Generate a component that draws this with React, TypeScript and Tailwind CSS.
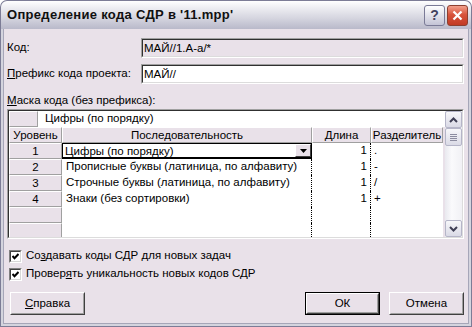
import React from "react";

const font = "font-['Liberation_Sans',Arial,sans-serif]";

function Sunken({ className = "", children }: { className?: string; children?: React.ReactNode }) {
  return (
    <div className={`border border-t-[#A0A0A0] border-l-[#A0A0A0] border-b-white border-r-white ${className}`}>
      <div className="h-full border border-t-[#303030] border-l-[#303030] border-b-[#DCDCDC] border-r-[#DCDCDC]">
        {children}
      </div>
    </div>
  );
}

function Raised({ className = "", children }: { className?: string; children?: React.ReactNode }) {
  return (
    <div
      className={`bg-[#E9E1E9] border border-t-white border-l-white border-b-[#A0A0A0] border-r-[#A0A0A0] ${className}`}
    >
      {children}
    </div>
  );
}

function Chevron({ down }: { down?: boolean }) {
  return (
    <svg width="9" height="6" viewBox="0 0 9 6">
      <polyline
        points={down ? "1,1 4.5,4.5 8,1" : "1,5 4.5,1.5 8,5"}
        fill="none"
        stroke="#3F3F55"
        strokeWidth="2"
      />
    </svg>
  );
}

function ScrollBar() {
  const btn =
    "h-[17px] w-[17px] flex items-center justify-center rounded-[2px] border border-[#B5B5C8] bg-[linear-gradient(to_bottom,#F7F7FA,#DADAE6)]";
  return (
    <div className="w-[17px] h-full flex flex-col bg-[linear-gradient(to_right,#E9E9EF,#FAFAFC_40%,#F1F1F5)]">
      <div className={btn}>
        <Chevron />
      </div>
      <div className={`${btn} h-[18px]`}>
        <div className="flex flex-col gap-[1px]">
          <div className="w-[7px] h-px bg-[#8C8CA0]" />
          <div className="w-[7px] h-px bg-[#8C8CA0]" />
          <div className="w-[7px] h-px bg-[#8C8CA0]" />
          <div className="w-[7px] h-px bg-[#8C8CA0]" />
        </div>
      </div>
      <div className="flex-1" />
      <div className={btn}>
        <Chevron down />
      </div>
    </div>
  );
}

function CheckBox({ children }: { children: React.ReactNode }) {
  return (
    <div className="h-[18px] flex items-center gap-[4px] pl-[2px]">
      <div className="w-[13px] h-[13px] bg-white border border-t-[#808080] border-l-[#808080] border-b-white border-r-white">
        <div className="w-full h-full border border-t-[#404040] border-l-[#404040] border-b-[#D8D8D8] border-r-[#D8D8D8] flex items-center justify-center">
          <svg width="7" height="7" viewBox="0 0 7 7">
            <polyline points="0.5,3 2.5,5.2 6.5,1" fill="none" stroke="#000" strokeWidth="2" />
          </svg>
        </div>
      </div>
      <span>{children}</span>
    </div>
  );
}

function Button({ children, isDefault }: { children: React.ReactNode; isDefault?: boolean }) {
  return (
    <div className={`w-[75px] h-[23px] ${isDefault ? "border border-black" : ""}`}>
      <div className="h-full bg-[#E9E1E9] border border-t-white border-l-white border-b-[#404040] border-r-[#404040]">
        <div className="h-full flex items-center justify-center border border-transparent border-b-[#A0A0A0] border-r-[#A0A0A0]">
          {children}
        </div>
      </div>
    </div>
  );
}

const rows = [
  { lvl: "1", seq: "Цифры (по порядку)", len: "1", sep: "." },
  { lvl: "2", seq: "Прописные буквы (латиница, по алфавиту)", len: "1", sep: "-" },
  { lvl: "3", seq: "Строчные буквы (латиница, по алфавиту)", len: "1", sep: "/" },
  { lvl: "4", seq: "Знаки (без сортировки)", len: "1", sep: "+" },
  { lvl: "", seq: "", len: "", sep: "" },
  { lvl: "", seq: "", len: "", sep: "" },
];

function CodeGrid() {
  return (
    <Sunken className="h-[130px] mt-[2px]">
      <div className="flex h-full overflow-hidden">
        <div className="flex-1 flex flex-col">
          <div className="flex h-[16px] shrink-0">
            <Raised className="w-[29px]" />
            <div className="flex-1 bg-white pl-[7px] leading-[14px]">Цифры (по порядку)</div>
          </div>
          <div className="flex h-[16px] shrink-0 leading-[14px]">
            <Raised className="w-[53px] text-center">Уровень</Raised>
            <Raised className="w-[250px] text-center">Последовательность</Raised>
            <Raised className="w-[59px] text-center">Длина</Raised>
            <Raised className="w-[72px] text-center">Разделитель</Raised>
          </div>
          {rows.map((r, i) => (
            <div key={i} className="flex h-[16px] shrink-0 leading-[14px]">
              <Raised className="w-[53px] text-center">{r.lvl}</Raised>
              {i === 0 ? (
                <div className="w-[250px] bg-white border-l border-t border-black border-b-2 border-r border-r-black flex">
                  <span className="flex-1 pl-[2px]">{r.seq}</span>
                  <div className="w-[16px] h-[13px] bg-[#E9E1E9] border border-t-white border-l-white border-b-[#404040] border-r-[#404040] flex items-center justify-center">
                    <svg width="7" height="4" viewBox="0 0 7 4">
                      <polygon points="0,0 7,0 3.5,4" fill="#000" />
                    </svg>
                  </div>
                </div>
              ) : (
                <div className="w-[250px] bg-white pl-[4px] border-r border-dotted border-black whitespace-nowrap overflow-hidden">
                  {r.seq}
                </div>
              )}
              <div className="w-[59px] bg-white text-right pr-[3px] border-r border-dotted border-black">{r.len}</div>
              <div className="w-[72px] bg-white pl-[3px]">{r.sep}</div>
            </div>
          ))}
        </div>
        <ScrollBar />
      </div>
    </Sunken>
  );
}

export default function App() {
  return (
    <div className={`w-[472px] h-[327px] flex flex-col ${font} text-[11.5px] text-black`}>
      <div className="h-[29px] shrink-0 rounded-t-[7px] border border-b-0 border-[#7C7C96] bg-[linear-gradient(to_bottom,#FFFFFF_0%,#F0F0F4_20%,#D6D6E0_60%,#B9B9CA_100%)] flex items-center pl-[6px] pr-[3px]">
        <span className="font-bold text-[13px] tracking-[0.3px] text-[#101010]">Определение кода СДР в '11.mpp'</span>
        <div className="ml-auto flex gap-[2px]">
          <div className="w-[21px] h-[21px] rounded-[3px] border border-[#7A7A96] bg-[linear-gradient(to_bottom,#FFFFFF,#C4C4D6)] flex items-center justify-center font-bold text-[14px] text-[#44445E]">
            ?
          </div>
          <div className="w-[21px] h-[21px] rounded-[3px] border border-[#8C4030] bg-[linear-gradient(to_bottom,#F2A08C,#D8543C_45%,#C23A24)] flex items-center justify-center">
            <svg width="11" height="11" viewBox="0 0 11 11">
              <path d="M1.5 1.5 L9.5 9.5 M9.5 1.5 L1.5 9.5" stroke="#fff" strokeWidth="2.2" />
            </svg>
          </div>
        </div>
      </div>
      <div className="flex-1 flex flex-col border-x border-b border-[#7C7C96] bg-[#D4D4DE] px-[2px] pb-[2px]">
        <div className="flex-1 flex flex-col bg-[#E9E1E9] border-x border-b border-[#A6A6B8] pl-[3px] pr-[4px] pt-[9px]">
          <div className="flex items-center h-[20px]">
            <span className="w-[134px]">Код:</span>
            <Sunken className="flex-1 h-[20px]">
              <div className="pl-[1px] leading-[16px]">МАЙ//1.А-а/*</div>
            </Sunken>
          </div>
          <div className="flex items-center h-[20px] mt-[6px]">
            <span className="w-[134px]">
              <u>П</u>рефикс кода проекта:
            </span>
            <Sunken className="flex-1 h-[20px]">
              <div className="h-full bg-white pl-[1px] leading-[16px]">МАЙ//</div>
            </Sunken>
          </div>
          <div className="mt-[9px] leading-[14px]">
            <u>М</u>аска кода (без префикса):
          </div>
          <CodeGrid />
          <div className="mt-[8px] flex flex-col">
            <CheckBox>
              Со<u>з</u>давать коды СДР для новых задач
            </CheckBox>
            <CheckBox>
              Провер<u>я</u>ть уникальность новых кодов СДР
            </CheckBox>
          </div>
          <div className="mt-[9px] flex pl-[3px]">
            <Button>
              <u>С</u>правка
            </Button>
            <div className="ml-auto flex gap-[9px]">
              <Button isDefault>ОК</Button>
              <Button>Отмена</Button>
            </div>
          </div>
        </div>
      </div>
    </div>
  );
}
